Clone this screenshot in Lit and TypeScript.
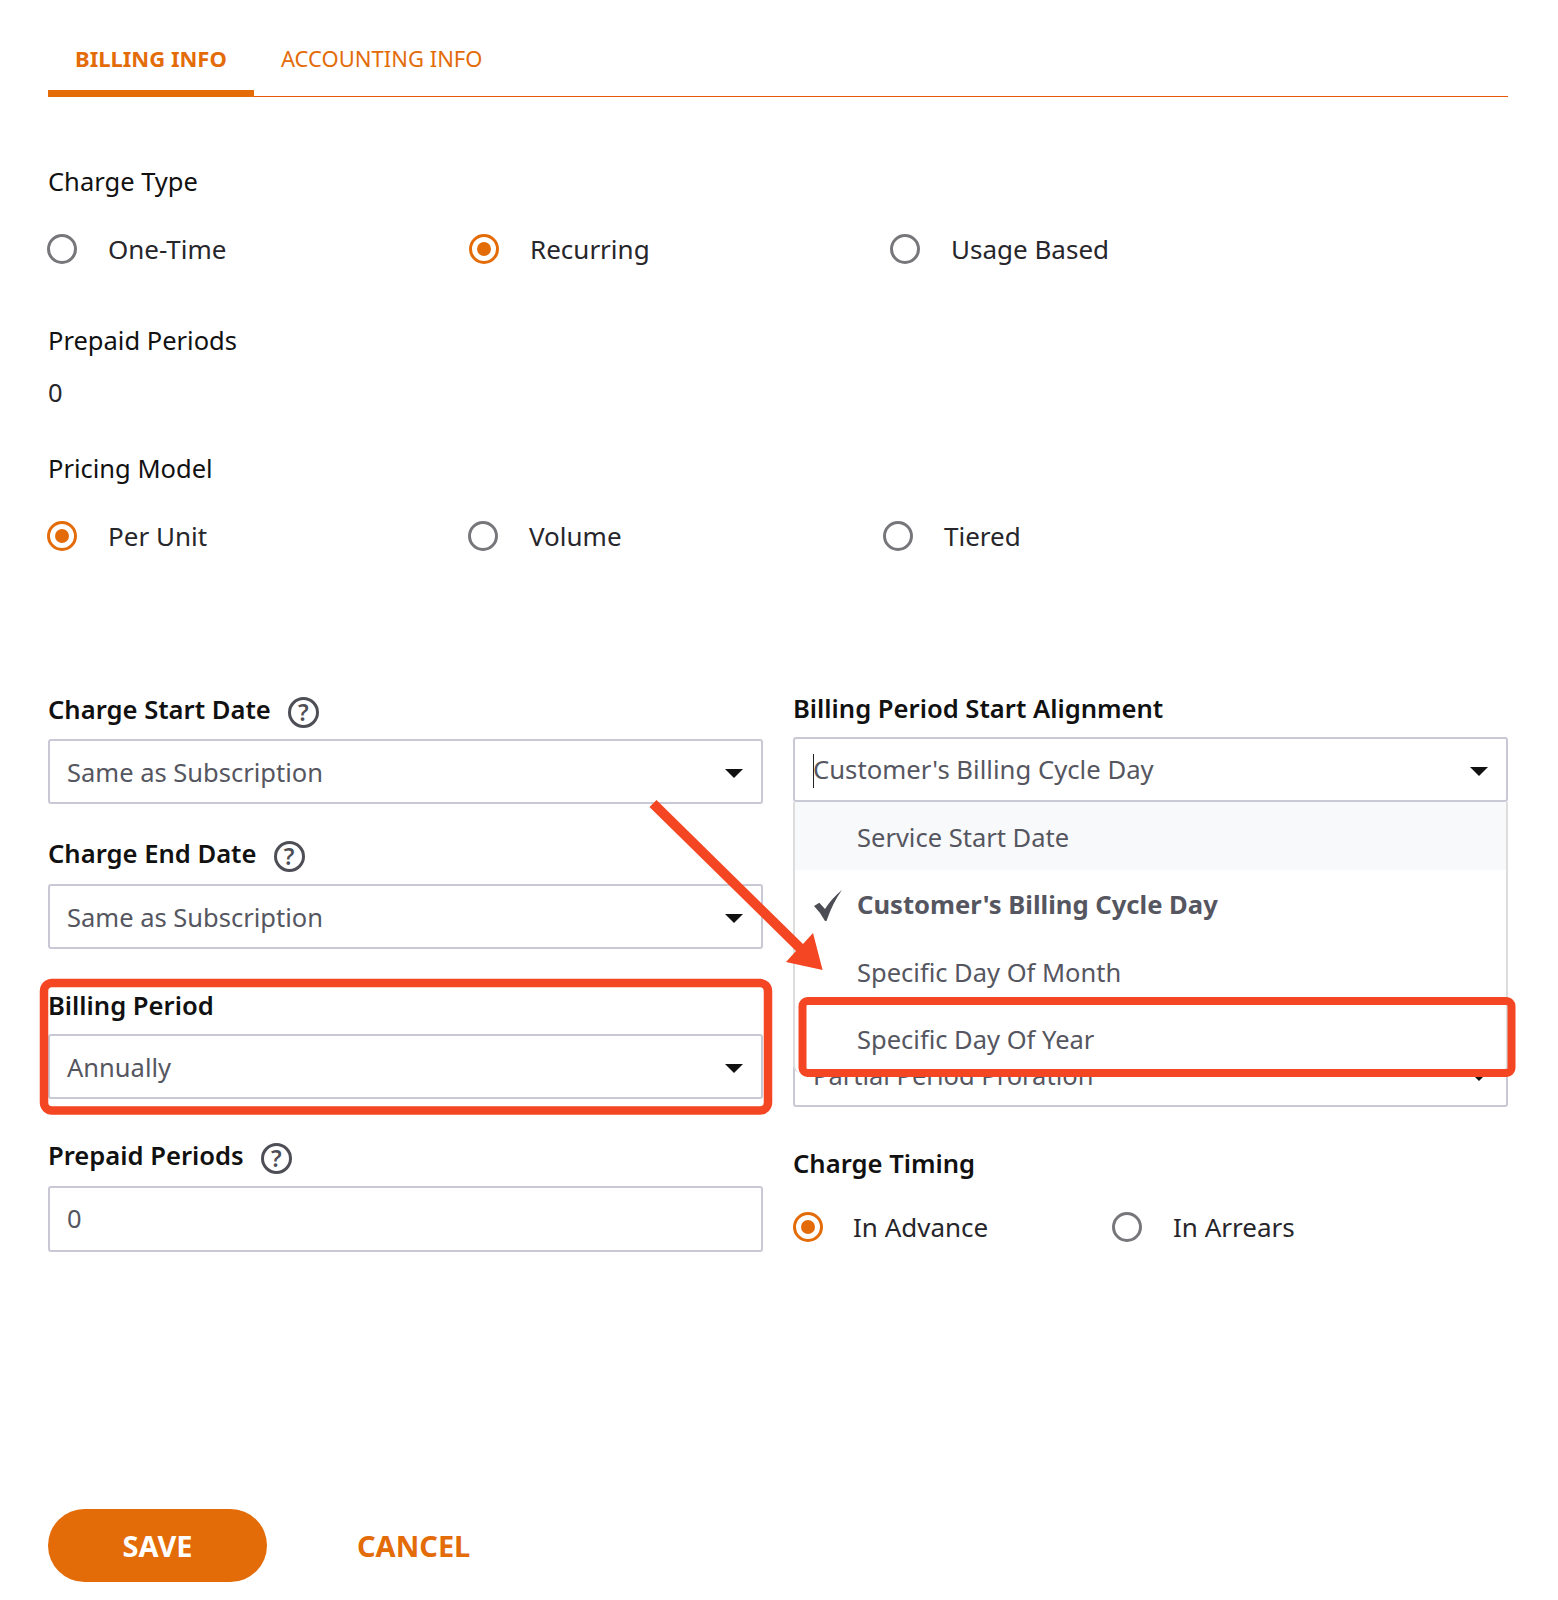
import { LitElement, html, css, svg } from "lit";
import { customElement } from "lit/decorators.js";

const caret = html`<span class="caret"></span>`;
const help = html`<span class="help">?</span>`;

function radio(label: string, on: boolean, width: number) {
  return html`<div class="radio-item" style="width:${width}px">
    <span class="radio ${on ? "on" : ""}"></span><span class="radio-text">${label}</span>
  </div>`;
}

function select(text: string) {
  return html`<div class="box"><span class="val">${text}</span>${caret}</div>`;
}

@customElement("app-root")
export class AppRoot extends LitElement {
  static styles = css`
    :host { display: block; width: 1558px; height: 1600px; background: #fff; position: relative; overflow: hidden;
      font-family: "Noto Sans", "Open Sans", sans-serif; font-size: 25.5px; color: #111; }
    * { box-sizing: border-box; }
    .page { padding: 0 50px 0 48px; }
    .tabs { display: flex; height: 97px; border-bottom: 1px solid #e8590c; }
    .tab { height: 97px; display: flex; align-items: flex-start; padding: 43px 27px 0 27px; line-height: 30px; font-size: 22px; color: #e36c09; white-space: nowrap; }
    .tab.active { font-weight: 700; border-bottom: 7px solid #e36c09; width: 206px; }
    .title { line-height: 36px; }
    .t1 { margin-top: 66px; }
    .radios { display: flex; height: 30px; margin-top: 35px; margin-left: -1px; }
    .radio-item { display: flex; align-items: center; height: 30px; font-size: 26px; }
    .radio { width: 30px; height: 30px; border-radius: 50%; border: 3px solid #77777b; flex: none; position: relative; background: #fff; }
    .radio.on { border-color: #e36c09; }
    .radio.on::after { content: ""; position: absolute; left: 5px; top: 5px; width: 14px; height: 14px; border-radius: 50%; background: #e36c09; }
    .radio-text { margin-left: 31px; color: #26262b; }
    .t2 { margin-top: 58px; }
    .zero { line-height: 36px; margin-top: 16px; color: #26262b; }
    .t3 { margin-top: 40px; }
    .cols { display: grid; grid-template-columns: 715px 715px; column-gap: 30px; margin-top: 141px; align-items: start; }
    .label { display: flex; align-items: center; height: 36px; font-weight: 600; font-size: 25.6px; color: #111; line-height: 34px; }
    .help { width: 31px; height: 31px; border-radius: 50%; border: 3px solid #4e4f56; color: #4e4f56; font-size: 23px; line-height: 25px; text-align: center; font-weight: 600; margin: 5px 0 0 17px; flex: none; }
    .box { height: 65px; border: 2px solid #c9c9d6; border-radius: 3px; display: flex; align-items: center; justify-content: space-between; padding: 0 18px; color: #55565f; background: #fff; }
    .left .box { padding-left: 17px; }
    .box.tall { height: 66px; padding-bottom: 3px; }
    .box.open { font-size: 25.7px; }
    .caret { width: 0; height: 0; border-left: 9px solid transparent; border-right: 9px solid transparent; border-top: 9px solid #111; flex: none; margin-top: 3px; }
    .l1 { margin-top: 11px; }
    .l2-head { margin-top: 32px; }
    .l2 { margin-top: 12px; }
    .l3-head { margin-top: 39px; }
    .l3 { margin-top: 10px; }
    .l4-head { margin-top: 39px; }
    .l4 { margin-top: 12px; }
    .right { margin-top: -1px; }
    .sel-open { margin-top: 10px; position: relative; }
    .caretline { width: 1px; height: 34px; background: #222; position: absolute; left: 20px; top: 17px; }
    .sel2 { margin-top: 240px; }
    .t-timing { margin-top: 39px; }
    .timing { display: flex; height: 30px; margin-top: 30px; }
    .timing .radio-item:first-child .radio-text { margin-left: 30px; }
    .menu { position: absolute; left: 0; right: 0; top: 65px; height: 271px; background: #fff; border-left: 2px solid #ddd; border-right: 2px solid #ddd; border-radius: 0 0 8px 8px; color: #55565f; z-index: 2; }
    .opt { height: 67.5px; display: flex; align-items: center; padding: 2px 0 0 62px; position: relative; }
    .opt.hov { background: #f8f9fb; }
    .opt.sel { font-weight: 700; font-size: 25.6px; }
    .check { position: absolute; left: 19px; top: 20px; }
    .actions { display: flex; align-items: center; margin-top: 257px; }
    .save { width: 219px; height: 73px; border-radius: 37px; background: #e36c09; color: #fff; font-weight: 700; font-size: 29px; display: flex; align-items: center; justify-content: center; }
    .cancel { margin-left: 90px; color: #e36c09; font-weight: 700; font-size: 29px; }
    .overlay { position: absolute; left: 0; top: 0; width: 1558px; height: 1600px; pointer-events: none; z-index: 5; }
  `;

  render() {
    return html`<div class="page">
      <div class="tabs">
        <div class="tab active">BILLING INFO</div>
        <div class="tab">ACCOUNTING INFO</div>
      </div>
      <div class="title t1">Charge Type</div>
      <div class="radios">
        ${radio("One-Time", false, 422)}${radio("Recurring", true, 421)}${radio("Usage Based", false, 400)}
      </div>
      <div class="title t2">Prepaid Periods</div>
      <div class="zero">0</div>
      <div class="title t3">Pricing Model</div>
      <div class="radios">
        ${radio("Per Unit", true, 421)}${radio("Volume", false, 415)}${radio("Tiered", false, 400)}
      </div>
      <div class="cols">
        <div class="left">
          <div class="label">Charge Start Date${help}</div>
          <div class="l1">${select("Same as Subscription")}</div>
          <div class="label l2-head">Charge End Date${help}</div>
          <div class="l2">${select("Same as Subscription")}</div>
          <div class="label l3-head">Billing Period</div>
          <div class="l3">${select("Annually")}</div>
          <div class="label l4-head">Prepaid Periods${help}</div>
          <div class="l4"><div class="box tall"><span class="val">0</span></div></div>
        </div>
        <div class="right">
          <div class="label">Billing Period Start Alignment</div>
          <div class="sel-open">
            <div class="box open"><span class="val">Customer's Billing Cycle Day</span>${caret}</div>
            <span class="caretline"></span>
            <div class="menu">
              <div class="opt hov">Service Start Date</div>
              <div class="opt sel">
                <svg class="check" width="28" height="31" viewBox="0 0 28 31"><path d="M0 16 L5.3 12.7 L11 19 Q18 8 28 0 Q19 12 12.5 31 L11 31 Q7 23 0 16 Z" fill="#4c4d55"/></svg>
                Customer's Billing Cycle Day
              </div>
              <div class="opt">Specific Day Of Month</div>
              <div class="opt">Specific Day Of Year</div>
            </div>
          </div>
          <div class="sel2">${select("Partial Period Proration")}</div>
          <div class="label t-timing">Charge Timing</div>
          <div class="timing">${radio("In Advance", true, 319)}${radio("In Arrears", false, 300)}</div>
        </div>
      </div>
      <div class="actions">
        <div class="save">SAVE</div>
        <div class="cancel">CANCEL</div>
      </div>
    </div>
    <svg class="overlay" viewBox="0 0 1558 1600">
      ${svg`
        <rect x="44" y="983" width="724" height="127.5" rx="8" fill="none" stroke="#f44623" stroke-width="8.5"/>
        <rect x="802.5" y="1001" width="709" height="72" rx="5" fill="none" stroke="#f44623" stroke-width="8"/>
        <path d="M656.5 800 L649.5 807 L796 951 L786 962 L822.6 970 L813 933 L803 944 Z" fill="#f44623"/>
      `}
    </svg>`;
  }
}
